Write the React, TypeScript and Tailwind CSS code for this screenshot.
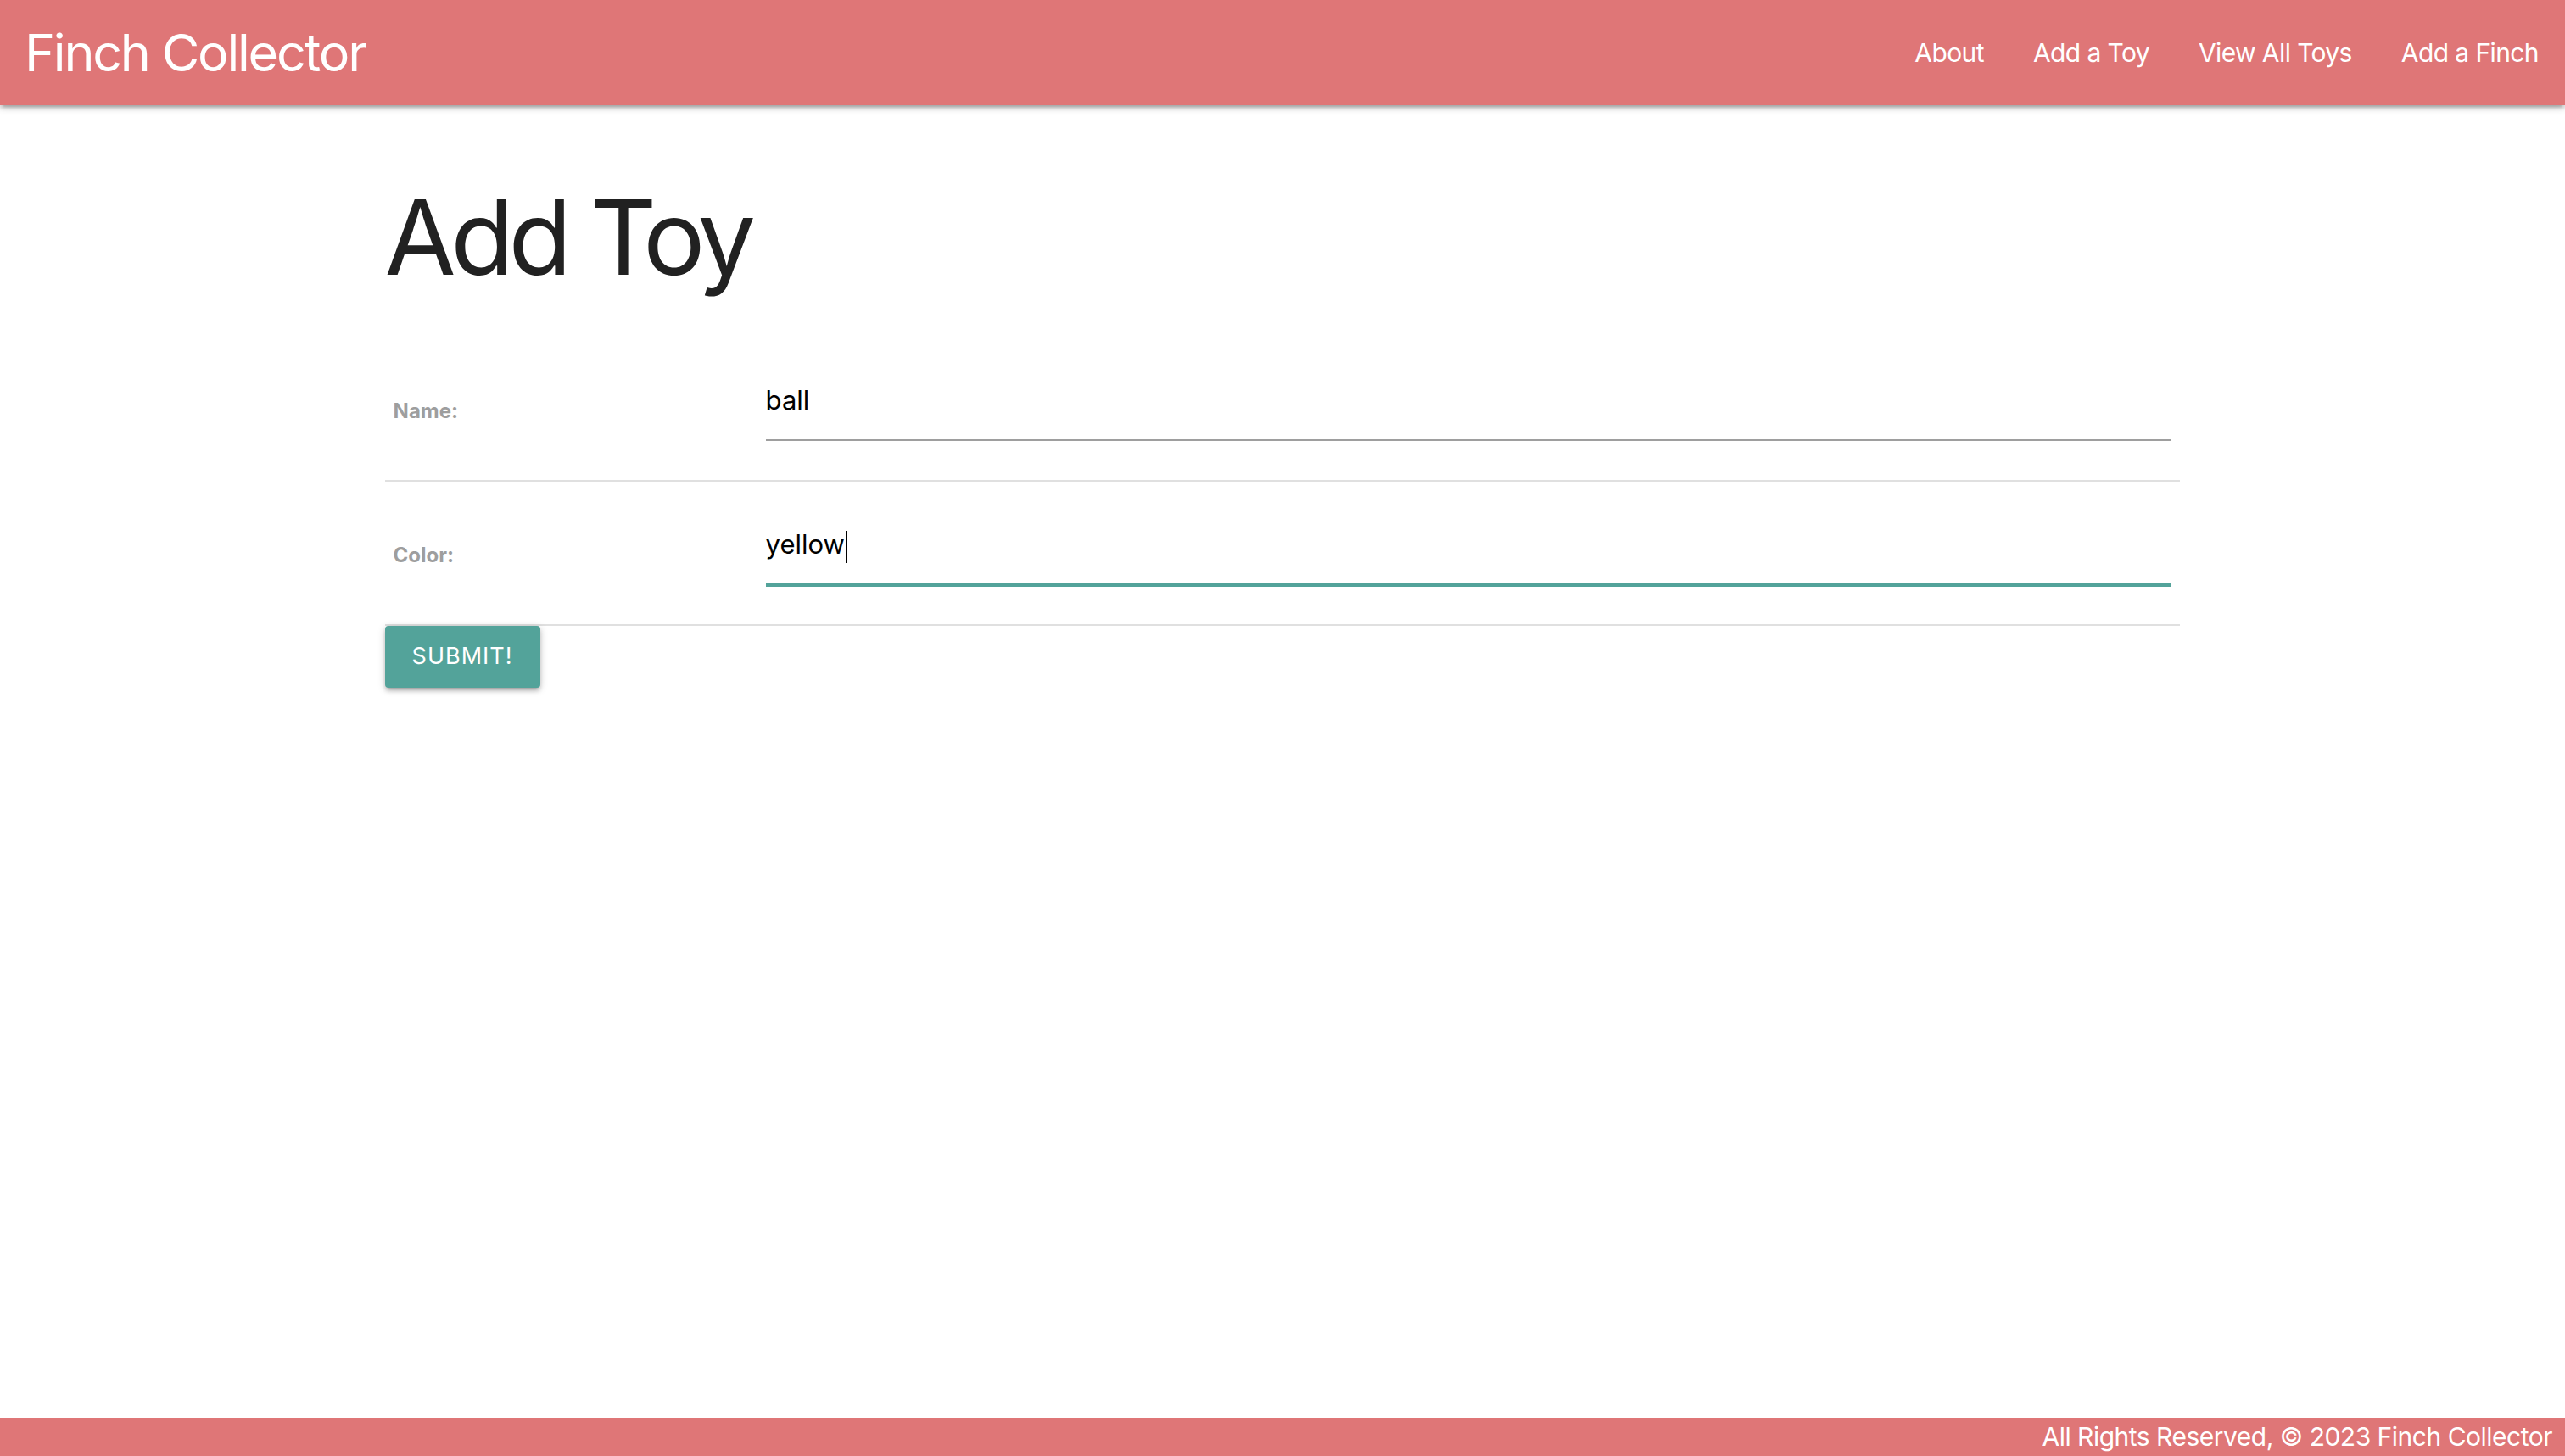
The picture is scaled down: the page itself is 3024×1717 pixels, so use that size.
export default function App() {
  return (
    <div className="min-h-screen flex flex-col bg-white font-[Inter,'Liberation_Sans',sans-serif]">
      <nav className="relative z-10 h-[124px] bg-[#df7677] flex items-center justify-between shadow-[0_4px_4px_0_rgba(0,0,0,0.14),0_6px_2px_-4px_rgba(0,0,0,0.12),0_2px_10px_0_rgba(0,0,0,0.2)]">
        <a className="pl-[29px] text-[61px] tracking-[-2.2px] leading-none text-white">Finch Collector</a>
        <ul className="flex items-center pr-[2px]">
          {["About", "Add a Toy", "View All Toys", "Add a Finch"].map((t) => (
            <li key={t}>
              <a className="block px-[29px] text-[30px] tracking-[-0.6px] leading-[124px] text-white">{t}</a>
            </li>
          ))}
        </ul>
      </nav>

      <main className="w-[70%] mx-auto">
        <h1 className="mt-[89px] mb-[51px] text-[122px] tracking-[-6.5px] leading-[1.1] font-normal text-[#212121]">Add Toy</h1>

        <form className="w-full">
          <div className="flex items-center border-b-2 border-[#e0e0e0]">
            <div className="w-[439px] pl-[10px] pt-[5px] text-[24px] font-bold text-[#9e9e9e]">Name:</div>
            <div className="flex-1 pl-[10px] pr-[10px] pt-[29px] pb-[30px]">
              <div className="h-[93px] mb-[16px] border-b-2 border-[#9e9e9e] flex items-center text-[31px] text-black">ball</div>
            </div>
          </div>
          <div className="flex items-center border-b-2 border-[#e0e0e0]">
            <div className="w-[439px] pl-[10px] pt-[5px] text-[24px] font-bold text-[#9e9e9e]">Color:</div>
            <div className="flex-1 pl-[10px] pr-[10px] pt-[29px] pb-[30px]">
              <div className="h-[93px] mb-[16px] border-b-2 border-[#53a39a] shadow-[0_2px_0_0_#53a39a] flex items-center text-[31px] text-black">
                yellow<span className="inline-block w-[2px] h-[38px] bg-black ml-[1px] translate-y-[2px]"></span>
              </div>
            </div>
          </div>
          <button
            type="button"
            className="h-[73px] px-[32px] rounded-[4px] bg-[#53a39a] text-white text-[27px] tracking-[1px] uppercase shadow-[0_4px_4px_0_rgba(0,0,0,0.14),0_6px_2px_-4px_rgba(0,0,0,0.12),0_2px_10px_0_rgba(0,0,0,0.2)]"
          >
            Submit!
          </button>
        </form>
      </main>

      <footer className="mt-auto h-[45px] bg-[#df7677] flex items-center justify-end pr-[15px] text-[30px] tracking-[-0.5px] text-white">
        All Rights Reserved, © 2023 Finch Collector
      </footer>
    </div>
  );
}
